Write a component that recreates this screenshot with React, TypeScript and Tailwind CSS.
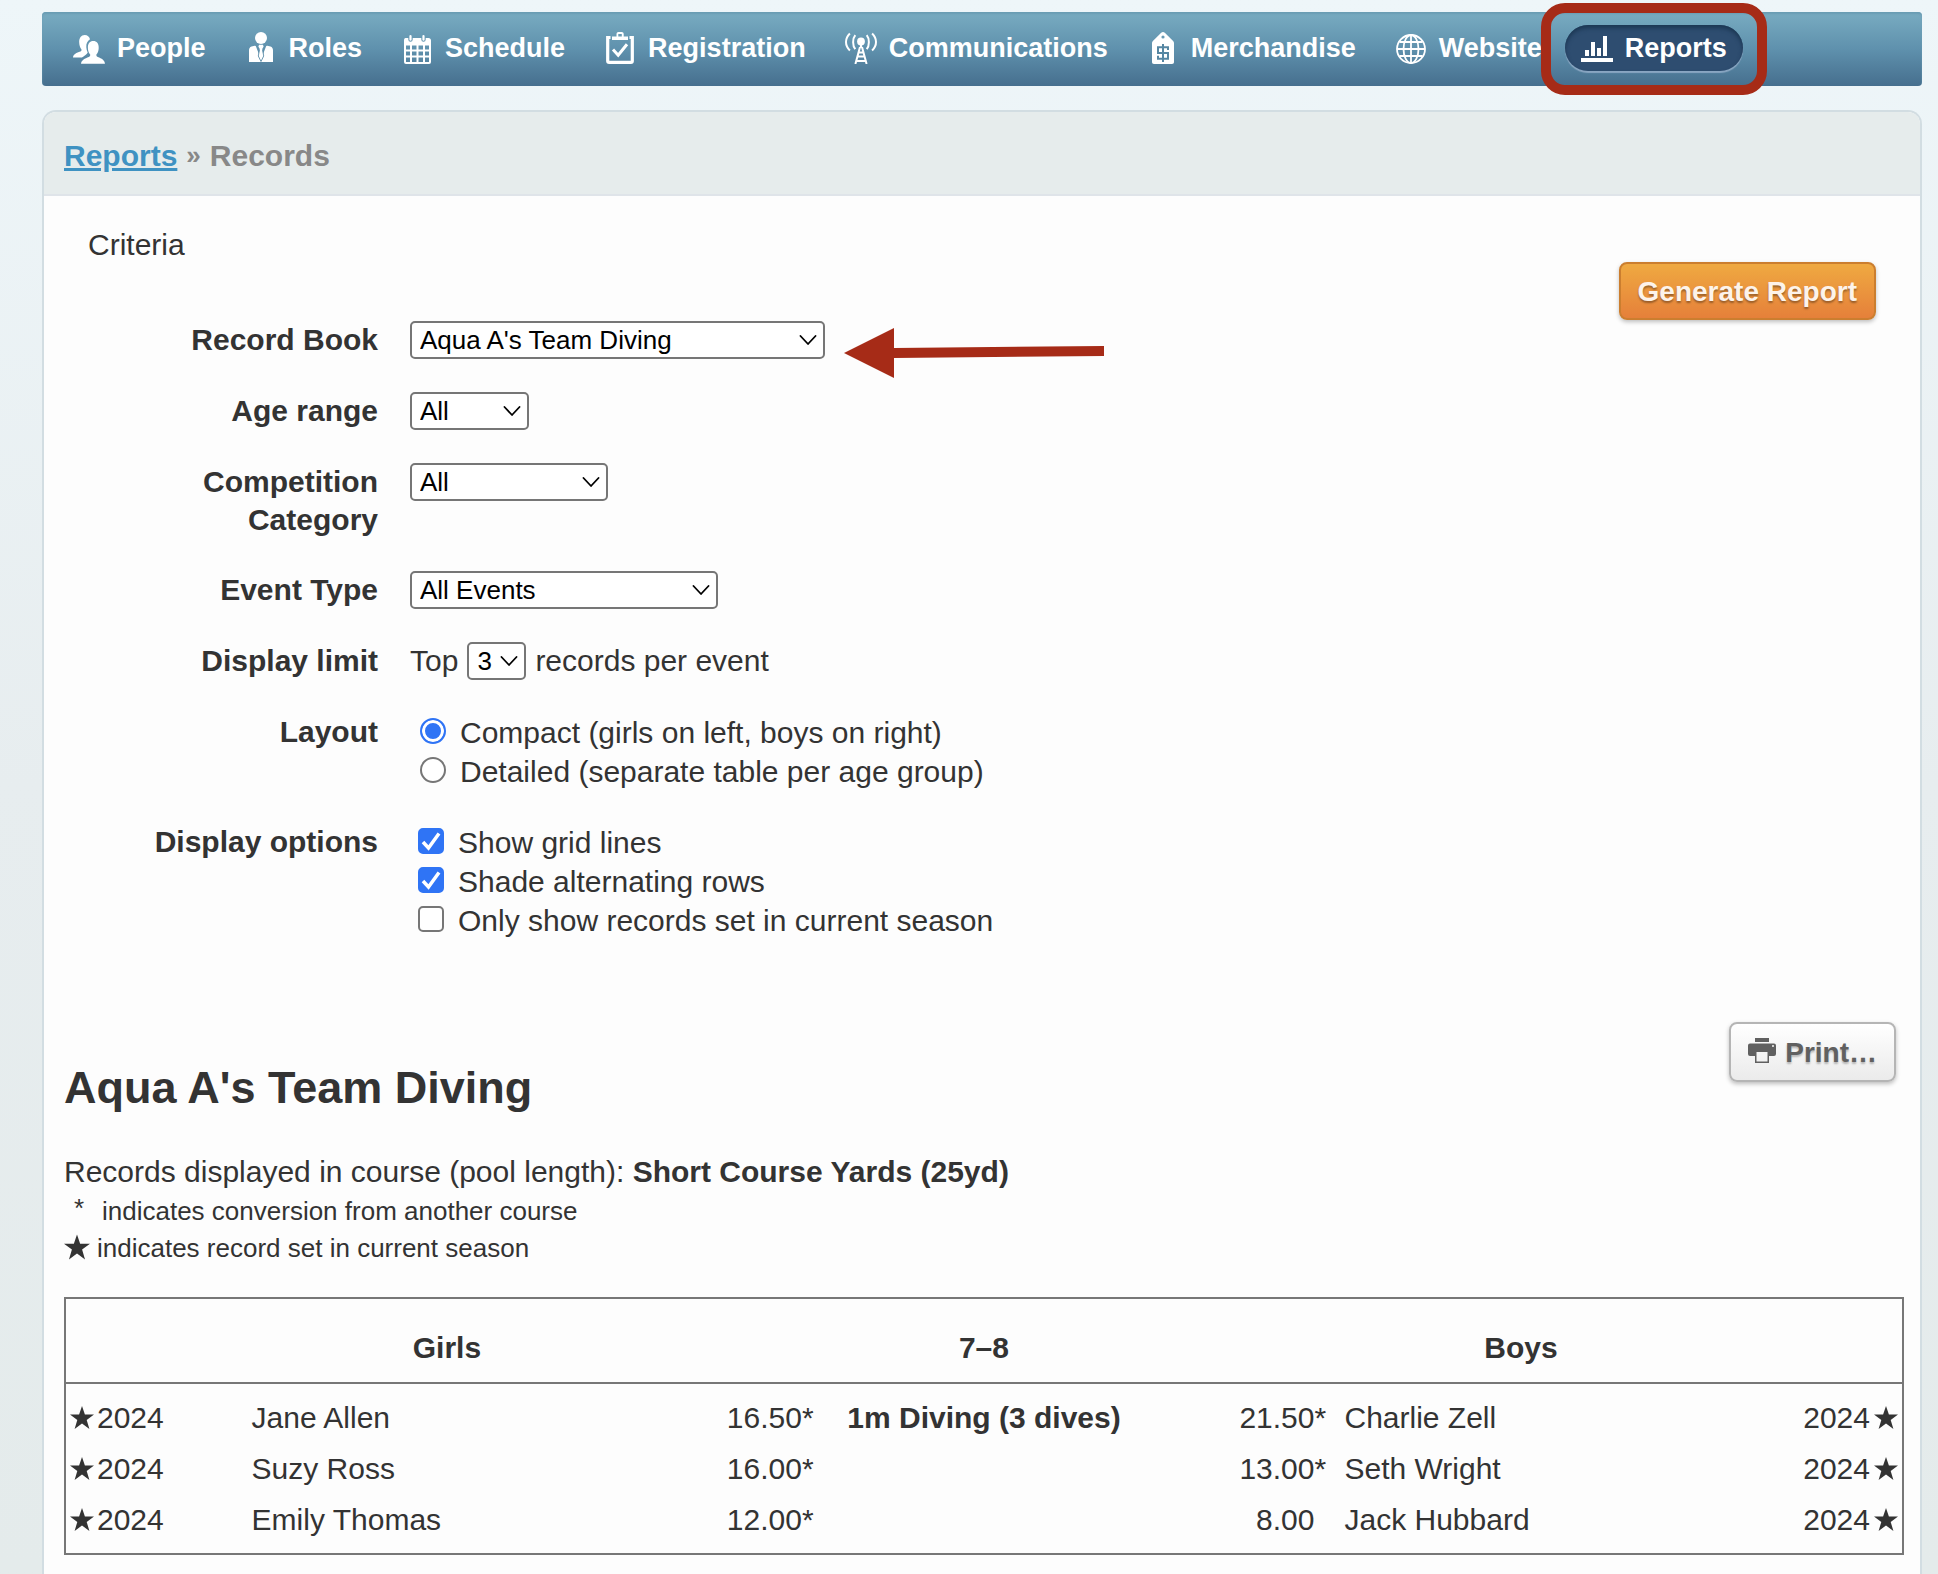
import React from 'react';

const PeopleIcon = () => (
  <svg viewBox="0 0 32 32" className="w-8 h-8 shrink-0" fill="currentColor">
    <path d="M0 25.500c.3-3.200 3.500-4.600 7.300-5.900 1-.4 1.300-1.100 1.200-2.200C7 15.800 6.300 13.400 6.200 10.600 5.900 6 8.300 3 11.700 3c2.800 0 4.700 1.600 5.300 4.300-2.600 1.600-3.900 4.300-3.700 7.900.1 2 .6 3.700 1.400 5.300-.8 1.300-1.600 2.200-3.200 3.200-.9.600-1.800 1.200-2.600 1.800z" />
    <path d="M8 31.800c.4-3.500 3.900-5.300 7.800-6.700 1.300-.5 1.500-1.300 1.400-2.500-1.500-1.700-2.200-4-2.300-6.700C14.700 11.600 16.900 9 20.300 9s5.600 2.600 5.400 6.900c-.1 2.700-.8 5-2.300 6.700-.1 1.200.1 2 1.400 2.500 3.900 1.400 6.800 3.200 7.200 6.700z" />
  </svg>
);

const RolesIcon = () => (
  <svg viewBox="0 0 32 32" className="w-8 h-8 shrink-0" fill="currentColor">
    <circle cx="16" cy="6" r="6" />
    <path d="M4 30V18.500c0-2 .8-3.500 2.500-4l3.200-.8c.6-.2 1 0 1.200.6L16 27.500l5.100-13.200c.2-.6.6-.8 1.200-.6l3.200.8c1.700.5 2.500 2 2.500 4V30z" />
    <path d="M14 12.800h4l.6 2-1.200 1.600 1 7.600L16 29l-2.400-5 1-7.600-1.200-1.600z" />
    <path d="M14.500 17.500 13.300 24 16 29.500 18.700 24l-1.200-6.500" fill="none" stroke="#5c8da8" strokeWidth="0.900" />
  </svg>
);

const ScheduleIcon = () => (
  <svg viewBox="0 0 32 32" className="w-8 h-8 shrink-0" fill="currentColor">
    <path
      fillRule="evenodd"
      d="M4.500 6h2.800v1.500a2.200 2.200 0 0 0 4.400 0V6h8.600v1.500a2.200 2.200 0 0 0 4.400 0V6h2.800C29 6 30 7 30 8.500V30a2 2 0 0 1-2 2H5a2 2 0 0 1-2-2V8.500C3 7 3.500 6 4.500 6zM5 13.500v4h4v-4zm6 0v4h4.500v-4zm6.500 0v4H22v-4zm6.500 0v4h4v-4zM5 19.500v4h4v-4zm6 0v4h4.500v-4zm6.500 0v4H22v-4zm6.500 0v4h4v-4zM5 25.500V30h4v-4.500zm6 0V30h4.500v-4.500zm6.500 0V30H22v-4.500zm6.500 0V30h4v-4.500z"
    />
    <rect x="8.400" y="3" width="2.200" height="5.800" rx="1.100" />
    <rect x="21.400" y="3" width="2.200" height="5.800" rx="1.100" />
  </svg>
);

const RegistrationIcon = () => (
  <svg viewBox="0 0 32 32" className="w-8 h-8 shrink-0" fill="none" stroke="currentColor">
    <path d="M6.500 5.500H3.700V29c0 .9.500 1.400 1.400 1.400h21.800c.9 0 1.400-.5 1.400-1.400V5.500h-2.800" strokeWidth="3.200" />
    <path
      d="M8 8V4.500h4.500V2.200C12.500.9 13.300 0 14.500 0h3.200c1.200 0 2 .9 2 2.200v2.300H24V8zM14.300 2v2.500h3.500V2z"
      fill="currentColor"
      fillRule="evenodd"
      stroke="none"
    />
    <path d="m9 17.500 5.200 5.700 8.800-11" strokeWidth="3" />
  </svg>
);

const CommunicationsIcon = () => (
  <svg viewBox="0 0 32 32" className="w-8 h-8 shrink-0" fill="none" stroke="currentColor" strokeWidth="2">
    <circle cx="16" cy="9.500" r="3.900" fill="currentColor" stroke="none" />
    <path d="M10.300 3.200c-2.900 3.500-2.900 10.500 0 14M21.700 3.200c2.900 3.500 2.900 10.500 0 14M4.900 1.500C-.3 6.500-.3 13.500 4.900 18.500M27.100 1.500c5.200 5 5.200 12 0 17" />
    <path d="M16 12v4M15 15l-4.600 17M17 15l4.600 17M14 20.500h4M13 24.500h6M11.700 29h8.600" />
  </svg>
);

const MerchandiseIcon = () => (
  <svg viewBox="0 0 32 32" className="w-8 h-8 shrink-0">
    <path
      fill="currentColor"
      fillRule="evenodd"
      d="M14.200.7c1-.9 2.600-.9 3.600 0l8.300 8.200c.6.600.9 1.300.9 2.100v19c0 1.200-.7 2-2 2H7c-1.300 0-2-.8-2-2V11c0-.8.300-1.500.9-2.100zM16 3.400a1.600 1.600 0 1 0 0 3.200 1.600 1.600 0 0 0 0-3.200z"
    />
    <path d="M21 18v-2.800H11v5.800h10v5.800H11v-3M16 12v18" fill="none" stroke="#5586a2" strokeWidth="2" />
  </svg>
);

const WebsiteIcon = () => (
  <svg viewBox="0 0 32 32" className="w-8 h-8 shrink-0" fill="none" stroke="currentColor" strokeWidth="1.800">
    <circle cx="16" cy="17" r="14" />
    <ellipse cx="16" cy="17" rx="7.500" ry="14" />
    <path d="M16 3v28M2 17h28M4.500 10h23M4.500 24h23" />
  </svg>
);

const ReportsIcon = () => (
  <svg viewBox="0 0 32 32" className="w-8 h-8 shrink-0" fill="currentColor">
    <path d="M0 26h32v4H0zM4 18h4v6H4zM10 10h4v14h-4zM16 16h4v8h-4zM22 4h4v20h-4z" />
  </svg>
);

const PrintIcon = () => (
  <svg viewBox="0 0 28 25" className="w-[28px] h-[25px] shrink-0 mb-1" fill="currentColor">
    <path
      fillRule="evenodd"
      d="M7 0h14v4H7zM2 5.500h24a2 2 0 0 1 2 2V16a2 2 0 0 1-2 2h-5v7H7v-7H2a2 2 0 0 1-2-2V7.500a2 2 0 0 1 2-2zM8.500 14v9.500h11V14zM25 7a1 1 0 1 0 0 2 1 1 0 0 0 0-2z"
    />
  </svg>
);

const Star = ({ className }: { className: string }) => (
  <svg viewBox="0 0 24 23" className={className} fill="currentColor" role="img" aria-label="Set in current season">
    <path d="m12 0 2.900 8.500H24l-7.300 5.400 2.700 9.100L12 17.600 4.600 23l2.700-9.100L0 8.500h9.100z" />
  </svg>
);

const navItems = [
  { name: 'People', icon: PeopleIcon },
  { name: 'Roles', icon: RolesIcon },
  { name: 'Schedule', icon: ScheduleIcon },
  { name: 'Registration', icon: RegistrationIcon },
  { name: 'Communications', icon: CommunicationsIcon },
  { name: 'Merchandise', icon: MerchandiseIcon },
  { name: 'Website', icon: WebsiteIcon },
];

const records = [
  { girl: 'Jane Allen', girlScore: '16.50', girlMark: '*', event: '1m Diving (3 dives)', boyScore: '21.50', boyMark: '*', boy: 'Charlie Zell' },
  { girl: 'Suzy Ross', girlScore: '16.00', girlMark: '*', event: '', boyScore: '13.00', boyMark: '*', boy: 'Seth Wright' },
  { girl: 'Emily Thomas', girlScore: '12.00', girlMark: '*', event: '', boyScore: '8.00', boyMark: '', boy: 'Jack Hubbard' },
];

const layouts = ['Compact (girls on left, boys on right)', 'Detailed (separate table per age group)'];

const displayOptions = [
  { label: 'Show grid lines', checked: true },
  { label: 'Shade alternating rows', checked: true },
  { label: 'Only show records set in current season', checked: false },
];

type SelectProps = { id: string; value: string; width: string };

const Select = ({ id, value, width }: SelectProps) => (
  <div className={`relative h-[38px] ${width}`}>
    <select
      id={id}
      className="appearance-none block w-full h-full pl-2 border-2 border-[#767676] rounded-[5px] bg-white text-black text-[26px] leading-[34px]"
    >
      <option>{value}</option>
    </select>
    <svg
      viewBox="0 0 18 10"
      className="absolute right-2 top-[14px] w-[18px] h-[10px] pointer-events-none"
      fill="none"
      stroke="#000"
      strokeWidth="1.800"
      strokeLinecap="round"
      strokeLinejoin="round"
    >
      <path d="m1.500 1 7.500 8 7.500-8" />
    </svg>
  </div>
);

type RowProps = { label: string; htmlFor?: string; children: React.ReactNode };

const Row = ({ label, htmlFor, children }: RowProps) => (
  <div className="flex gap-8">
    {htmlFor ? (
      <label htmlFor={htmlFor} className="w-[290px] shrink-0 text-right font-bold leading-[38px]">
        {label}
      </label>
    ) : (
      <span className="w-[290px] shrink-0 text-right font-bold leading-[38px]">{label}</span>
    )}
    <div className="min-h-[39px]">{children}</div>
  </div>
);

const NavBar = () => (
  <nav className="flex items-start gap-[7px] h-[74px] pt-[13px] px-[15px] rounded-[4px] text-white text-[27px] font-bold bg-linear-to-b from-[#79acc1] via-[#5f91ad] to-[#466f8e] shadow-[inset_0_2px_2px_#6a9cb3]">
    {navItems.map(({ name, icon: Icon }) => (
      <a key={name} href="#" className="flex items-center gap-3 h-[46px] px-4">
        <Icon />
        {name}
      </a>
    ))}
    <a
      href="#"
      className="relative flex items-center gap-3 h-[46px] px-4 rounded-full bg-[#2e4d70] shadow-[inset_0_3px_4px_#1b3753,0_2px_1px_#89a6c2]"
    >
      <ReportsIcon />
      Reports
      <span className="absolute -inset-x-6 -top-[22px] -bottom-6 border-10 border-[#a62b17] rounded-[24px] pointer-events-none" />
    </a>
  </nav>
);

const Criteria = () => (
  <form className="px-6">
    <div className="flex justify-between items-start pt-[29px] pr-1">
      <h2>Criteria</h2>
      <button
        type="button"
        className="mt-[37px] mb-px h-[58px] px-[17px] border-2 border-[#cb7e2f] rounded-[8px] text-[28px] font-bold text-[#fdf3ea] bg-linear-to-b from-[#efa941] to-[#e5803a] shadow-[0_2px_4px_rgba(0,0,0,0.25)] text-shadow-[0_2px_2px_rgba(0,0,0,0.35)]"
      >
        Generate Report
      </button>
    </div>
    <div className="flex flex-col gap-8">
      <Row label="Record Book" htmlFor="book">
        <div className="relative">
          <Select id="book" value="Aqua A's Team Diving" width="w-[415px]" />
          <svg viewBox="0 0 260 50" className="absolute left-full top-[7px] ml-[19px] w-[260px] h-[50px]" fill="#a62b17">
            <path d="M0 25 50 0v20l210-2v10L50 30v20z" />
          </svg>
        </div>
      </Row>
      <Row label="Age range" htmlFor="age">
        <Select id="age" value="All" width="w-[119px]" />
      </Row>
      <Row label="Competition Category" htmlFor="category">
        <Select id="category" value="All" width="w-[198px]" />
      </Row>
      <Row label="Event Type" htmlFor="event">
        <Select id="event" value="All Events" width="w-[308px]" />
      </Row>
      <Row label="Display limit" htmlFor="limit">
        <div className="flex gap-[9px]">
          <span className="leading-[37px]">Top</span>
          <Select id="limit" value="3" width="w-[59px]" />
          <span className="leading-[37px]">records per event</span>
        </div>
      </Row>
      <Row label="Layout">
        {layouts.map((layout, index) => (
          <label key={layout} className="flex gap-[14px] pl-[10px]">
            <input
              type="radio"
              name="layout"
              defaultChecked={index === 0}
              className="appearance-none mt-[5px] w-[26px] h-[26px] rounded-full border-2 border-[#767676] bg-white checked:border-[#2f74f5] checked:bg-[#2f74f5] checked:shadow-[inset_0_0_0_3px_#fff]"
            />
            {layout}
          </label>
        ))}
      </Row>
      <Row label="Display options">
        {displayOptions.map((option) => (
          <label key={option.label} className="relative flex gap-[14px] pl-2">
            <input
              type="checkbox"
              defaultChecked={option.checked}
              className="peer appearance-none mt-[5px] w-[26px] h-[26px] rounded-[5px] border-2 border-[#767676] bg-white checked:border-[#2f74f5] checked:bg-[#2f74f5]"
            />
            <svg
              viewBox="0 0 26 26"
              className="absolute left-2 top-[5px] w-[26px] h-[26px] hidden peer-checked:block pointer-events-none"
              fill="none"
              stroke="#fff"
              strokeWidth="3.500"
            >
              <path d="m5 14 5.500 6L21 5.500" />
            </svg>
            {option.label}
          </label>
        ))}
      </Row>
    </div>
  </form>
);

const RecordsTable = () => (
  <table className="mt-[30px] w-full table-fixed border-2 border-[#777] border-separate border-spacing-0">
    <colgroup>
      <col className="w-[10%]" />
      <col className="w-[22%]" />
      <col className="w-[9.500%]" />
      <col className="w-[17%]" />
      <col className="w-[10.700%]" />
      <col className="w-[20.800%]" />
      <col className="w-[10%]" />
    </colgroup>
    <thead>
      <tr>
        <th colSpan={3} className="pt-[29px] pb-[15px] border-b-2 border-[#777]">Girls</th>
        <th className="pt-[29px] pb-[15px] border-b-2 border-[#777]">7–8</th>
        <th colSpan={3} className="pt-[29px] pb-[15px] border-b-2 border-[#777]">Boys</th>
      </tr>
    </thead>
    <tbody className="[&>tr:first-child>td]:pt-[14px] [&>tr:last-child>td]:pb-[14px]">
      {records.map((record) => (
        <tr key={record.girl}>
          <td className="py-[6px] pl-1">
            <span className="flex items-center gap-[3px]">
              <Star className="w-[24px] h-[23px]" />
              2024
            </span>
          </td>
          <td className="py-[6px] pl-[2px]">{record.girl}</td>
          <td className="py-[6px] pr-[14px]">
            <span className="flex justify-end">
              {record.girlScore}
              <span className="w-3">{record.girlMark}</span>
            </span>
          </td>
          <td className="py-[6px] text-center font-bold whitespace-nowrap">{record.event}</td>
          <td className="py-[6px] pr-[10px]">
            <span className="flex justify-end">
              {record.boyScore}
              <span className="w-3">{record.boyMark}</span>
            </span>
          </td>
          <td className="py-[6px] pl-2">{record.boy}</td>
          <td className="py-[6px] pr-1">
            <span className="flex items-center justify-end gap-1">
              2024
              <Star className="w-[24px] h-[23px]" />
            </span>
          </td>
        </tr>
      ))}
    </tbody>
  </table>
);

const Results = () => (
  <section className="pt-[82px]">
    <div className="flex justify-between items-start pr-2">
      <h1 className="pt-[39px] text-[45px] leading-[54px] font-bold">Aqua A's Team Diving</h1>
      <button
        type="button"
        className="flex items-center gap-[9px] h-[60px] px-[17px] border-2 border-[#b5b5b5] rounded-[8px] text-[28px] font-bold text-[#606060] bg-linear-to-b from-white to-[#ebebeb] shadow-[0_2px_4px_rgba(0,0,0,0.25)] text-shadow-[0_2px_2px_rgba(0,0,0,0.25)]"
      >
        <PrintIcon />
        Print…
      </button>
    </div>
    <p className="mt-[37px] mb-[2px]">
      Records displayed in course (pool length): <strong>Short Course Yards (25yd)</strong>
    </p>
    <p className="flex text-[26px] leading-[37px]">
      <span className="w-[38px] pl-[10px] leading-[30px]">*</span>
      indicates conversion from another course
    </p>
    <p className="flex gap-[7px] text-[26px] leading-[37px]">
      <Star className="mt-1 w-[26px] h-[26px]" />
      indicates record set in current season
    </p>
    <RecordsTable />
  </section>
);

const App: React.FC = () => {
  return (
    <div className="min-h-screen flex flex-col gap-6 pt-3 pl-[42px] pr-4 bg-linear-to-b from-[#eef6f9] via-[#e7edef] to-[#e4ebeb] text-[30px] leading-[39px] text-[#333] font-['Liberation_Sans',Arial,sans-serif]">
      <NavBar />
      <main className="flex-1 border-2 border-b-0 border-[#d2dde2] rounded-t-[14px] bg-[#fdfdfd]">
        <header className="flex items-center gap-[9px] px-5 pt-[24px] pb-[19px] border-b-2 border-[#dfe4e9] rounded-t-[12px] bg-[#e6ecec] font-bold text-[#888]">
          <a href="#" className="text-[#3f92c2] underline">Reports</a>
          <span className="text-[26px]">»</span>
          Records
        </header>
        <div className="pl-5 pr-4 pb-4">
          <Criteria />
          <Results />
        </div>
      </main>
    </div>
  );
};

export default App;
